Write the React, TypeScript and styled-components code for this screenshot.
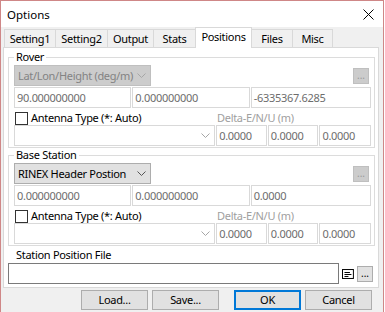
import React from "react";
import styled, { createGlobalStyle } from "styled-components";

const GlobalStyle = createGlobalStyle`
  html, body {
    margin: 0;
    padding: 0;
    background: #ffffff;
  }
  * {
    box-sizing: border-box;
  }
`;

const Window = styled.div`
  width: 384px;
  height: 312px;
  border: 1px solid #cf8787;
  border-bottom: none;
  background: #f0f0f0;
  display: flex;
  flex-direction: column;
  font-family: "Noto Sans", "Liberation Sans", sans-serif;
  font-size: 11px;
  letter-spacing: -0.3px;
  color: #000;
`;

const TitleBar = styled.div`
  height: 26px;
  background: #ffffff;
  display: flex;
  align-items: center;
  justify-content: space-between;
  padding: 0 9px 0 6px;
  font-size: 11.5px;
  letter-spacing: 0;
`;

const Client = styled.div`
  display: flex;
  flex-direction: column;
  padding: 0 4px 0 2px;
`;

const TabStrip = styled.div`
  display: flex;
  align-items: flex-end;
  height: 20px;
  padding-left: 1px;
`;

const Tab = styled.div<{ $active?: boolean; $w: number }>`
  width: ${(p) => p.$w}px;
  height: ${(p) => (p.$active ? 21 : 18)}px;
  margin-left: -1px;
  margin-bottom: ${(p) => (p.$active ? -1 : 0)}px;
  position: relative;
  z-index: ${(p) => (p.$active ? 1 : 0)};
  border: 1px solid #d9d9d9;
  border-bottom: none;
  background: ${(p) => (p.$active ? "#ffffff" : "#f0f0f0")};
  display: flex;
  justify-content: center;
  align-items: ${(p) => (p.$active ? "flex-start" : "center")};
  padding-top: ${(p) => (p.$active ? 2 : 1)}px;
  line-height: 14px;
  &:first-child {
    margin-left: 0;
  }
`;

const Panel = styled.div`
  height: 241px;
  background: #ffffff;
  border: 1px solid #d9d9d9;
  padding: 0 3px 0 4px;
  display: flex;
  flex-direction: column;
`;

const Group = styled.fieldset<{ $top: number }>`
  margin: ${(p) => p.$top}px 0 0 0;
  padding: 1px 3px 1px 5px;
  border: 1px solid #dcdcdc;
  min-inline-size: 0;
  display: flex;
  flex-direction: column;
`;

const Legend = styled.legend`
  padding: 0 2px;
  line-height: 14px;
  height: 14px;
`;

const Row = styled.div<{ $gap?: number }>`
  display: flex;
  align-items: center;
  gap: ${(p) => p.$gap ?? 2}px;
  height: 21px;
`;

const ComboRow = styled(Row)`
  justify-content: space-between;
  margin-bottom: 1px;
`;

const Combo = styled.div<{ $w: number; $disabled?: boolean; $plain?: boolean }>`
  width: ${(p) => p.$w}px;
  height: 21px;
  border: 1px solid
    ${(p) => (p.$plain ? "#d9d9d9" : p.$disabled ? "#bfbfbf" : "#adadad")};
  background: ${(p) => (p.$plain ? "#ffffff" : p.$disabled ? "#cccccc" : "#e1e1e1")};
  color: ${(p) => (p.$disabled ? "#838383" : "#000")};
  display: flex;
  align-items: center;
  gap: 2px;
  padding: 0 4px 0 3px;
  line-height: 14px;
  white-space: nowrap;
  svg {
    flex-shrink: 0;
  }
`;

const ComboText = styled.span`
  flex: 1;
  overflow: hidden;
`;

const Edit = styled.div<{ $w: number; $enabled?: boolean }>`
  width: ${(p) => p.$w}px;
  height: 21px;
  border: 1px solid ${(p) => (p.$enabled ? "#7a7a7a" : "#d9d9d9")};
  background: #ffffff;
  color: #6d6d6d;
  padding: 0 2px;
  display: flex;
  align-items: center;
  line-height: 14px;
  white-space: nowrap;
  overflow: hidden;
`;

const Dots = styled.div<{ $disabled?: boolean }>`
  width: 16px;
  height: 16px;
  margin-right: 2px;
  border: 1px solid ${(p) => (p.$disabled ? "#bfbfbf" : "#adadad")};
  background: ${(p) => (p.$disabled ? "#cccccc" : "#e1e1e1")};
  color: ${(p) => (p.$disabled ? "#9a9a9a" : "#000")};
  font-size: 10px;
  line-height: 10px;
  letter-spacing: 0;
  display: flex;
  justify-content: center;
  align-items: flex-end;
  padding-bottom: 3px;
  flex-shrink: 0;
`;

const CheckRow = styled.div`
  display: flex;
  align-items: center;
  height: 17px;
  padding-top: 3px;
  line-height: 14px;
`;

const CheckBox = styled.div`
  width: 13px;
  height: 13px;
  border: 1px solid #333333;
  background: #ffffff;
  margin: 0 3px 0 1px;
  flex-shrink: 0;
`;

const CheckLabel = styled.span`
  width: 186px;
`;

const DimLabel = styled.span`
  color: #a0a0a0;
`;

const FileLabel = styled.div`
  margin: 2px 0 1px 8px;
  line-height: 14px;
  height: 14px;
`;

const FileRow = styled(Row)`
  gap: 3px;
`;

const Footer = styled.div`
  display: flex;
  justify-content: flex-end;
  padding: 2px 7px 0 0;
  gap: 4px;
`;

const Button = styled.div<{ $default?: boolean; $space?: number }>`
  width: 67px;
  height: 20px;
  border: ${(p) => (p.$default ? "2px solid #0078d7" : "1px solid #adadad")};
  background: #e1e1e1;
  display: flex;
  align-items: center;
  justify-content: center;
  line-height: 14px;
  margin-left: ${(p) => p.$space ?? 0}px;
`;

const Chevron = ({ color }: { color: string }) => (
  <svg width="9" height="5" viewBox="0 0 9 5">
    <polyline points="0.5,0.5 4.5,4.5 8.5,0.5" fill="none" stroke={color} strokeWidth="1" />
  </svg>
);

const CloseIcon = () => (
  <svg width="11" height="11" viewBox="0 0 11 11">
    <path d="M0.5 0.5 L10.5 10.5 M10.5 0.5 L0.5 10.5" stroke="#000" strokeWidth="1" />
  </svg>
);

const ListIcon = () => (
  <svg width="12" height="10" viewBox="0 0 12 10">
    <rect x="0.5" y="0.5" width="11" height="9" fill="#fff" stroke="#000" />
    <path d="M2.5 3.5 H8 M2.5 5.5 H9.5 M2.5 7.5 H6.5" stroke="#000" strokeWidth="1" />
  </svg>
);

const TABS = [
  { label: "Setting1", w: 52 },
  { label: "Setting2", w: 53 },
  { label: "Output", w: 47 },
  { label: "Stats", w: 43 },
  { label: "Positions", w: 57, active: true },
  { label: "Files", w: 42 },
  { label: "Misc", w: 41 },
];

type StationProps = {
  title: string;
  top: number;
  mode: string;
  modeDisabled?: boolean;
  pos: [string, string, string];
};

function StationGroup({ title, top, mode, modeDisabled, pos }: StationProps) {
  return (
    <Group $top={top}>
      <Legend>{title}</Legend>
      <ComboRow>
        <Combo $w={137} $disabled={modeDisabled}>
          <ComboText>{mode}</ComboText>
          <Chevron color={modeDisabled ? "#a6a6a6" : "#555"} />
        </Combo>
        <Dots $disabled>...</Dots>
      </ComboRow>
      <Row $gap={1}>
        <Edit $w={118}>{pos[0]}</Edit>
        <Edit $w={118}>{pos[1]}</Edit>
        <Edit $w={121}>{pos[2]}</Edit>
      </Row>
      <CheckRow>
        <CheckBox />
        <CheckLabel>Antenna Type (*: Auto)</CheckLabel>
        <DimLabel>Delta-E/N/U (m)</DimLabel>
      </CheckRow>
      <Row $gap={1}>
        <Combo $w={203} $plain>
          <ComboText />
          <Chevron color="#a6a6a6" />
        </Combo>
        <Edit $w={51}>0.0000</Edit>
        <Edit $w={51}>0.0000</Edit>
        <Edit $w={52}>0.0000</Edit>
      </Row>
    </Group>
  );
}

export default function App() {
  return (
    <>
      <GlobalStyle />
      <Window>
        <TitleBar>
          <span>Options</span>
          <CloseIcon />
        </TitleBar>
        <Client>
          <TabStrip>
            {TABS.map((t) => (
              <Tab key={t.label} $w={t.w} $active={t.active}>
                {t.label}
              </Tab>
            ))}
          </TabStrip>
          <Panel>
            <StationGroup
              title="Rover"
              top={2}
              mode="Lat/Lon/Height (deg/m)"
              modeDisabled
              pos={["90.000000000", "0.000000000", "-6335367.6285"]}
            />
            <StationGroup
              title="Base Station"
              top={0}
              mode="RINEX Header Postion"
              pos={["0.000000000", "0.000000000", "0.0000"]}
            />
            <FileLabel>Station Position File</FileLabel>
            <FileRow>
              <Edit $w={334} $enabled />
              <ListIcon />
              <Dots>...</Dots>
            </FileRow>
          </Panel>
          <Footer>
            <Button>Load...</Button>
            <Button>Save...</Button>
            <Button $default $space={11}>
              OK
            </Button>
            <Button>Cancel</Button>
          </Footer>
        </Client>
      </Window>
    </>
  );
}
